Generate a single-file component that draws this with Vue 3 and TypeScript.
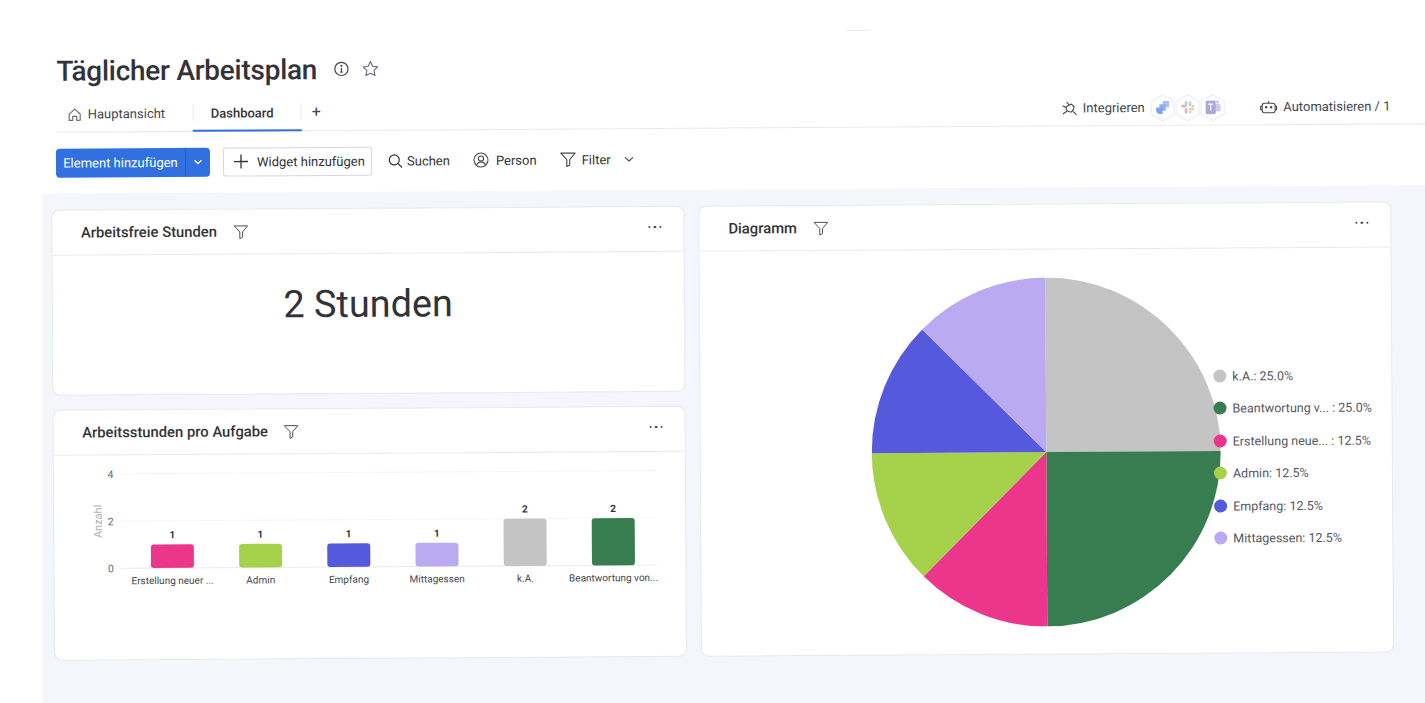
<script setup lang="ts">
// Colours shared by the bar chart and the pie
const pieSlices = [
  { label: "k.A.: 25.0%", value: 25, color: "#c4c4c4" },
  { label: "Beantwortung v... : 25.0%", value: 25, color: "#377d50" },
  { label: "Erstellung neue... : 12.5%", value: 12.5, color: "#ec368b" },
  { label: "Admin: 12.5%", value: 12.5, color: "#a6d14a" },
  { label: "Empfang: 12.5%", value: 12.5, color: "#5559db" },
  { label: "Mittagessen: 12.5%", value: 12.5, color: "#b9aaf2" },
];

const bars = [
  { label: "Erstellung neuer ...", value: 1, color: "#ec368b" },
  { label: "Admin", value: 1, color: "#a6d14a" },
  { label: "Empfang", value: 1, color: "#5559db" },
  { label: "Mittagessen", value: 1, color: "#b9aaf2" },
  { label: "k.A.", value: 2, color: "#c4c4c4" },
  { label: "Beantwortung von...", value: 2, color: "#377d50" },
];

const R = 174.5;
function slicePaths() {
  let start = 0;
  return pieSlices.map((s) => {
    const end = start + (s.value / 100) * Math.PI * 2;
    const x1 = R + R * Math.sin(start);
    const y1 = R - R * Math.cos(start);
    const x2 = R + R * Math.sin(end);
    const y2 = R - R * Math.cos(end);
    start = end;
    return { d: `M${R} ${R}L${x1} ${y1}A${R} ${R} 0 0 1 ${x2} ${y2}Z`, color: s.color };
  });
}
const slices = slicePaths();

const baseY = 112;
const unit = 23.6;
</script>

<template>
  <div class="stage">
    <div class="page">
      <div class="notch"></div>

      <div class="title-row">
        <h1>Täglicher Arbeitsplan</h1>
        <svg class="ico info" width="16" height="16" viewBox="0 0 16 16" fill="none" stroke="#44464f" stroke-width="1.2">
          <circle cx="8" cy="8" r="6.6" />
          <path d="M8 7.2v4M6.8 11.2h2.4" />
          <circle cx="8" cy="4.9" r=".5" fill="#44464f" />
        </svg>
        <svg class="ico star" width="18" height="18" viewBox="0 0 18 18" fill="none" stroke="#676879" stroke-width="1.1" stroke-linejoin="round">
          <path d="M9 1.8l2.2 4.7 5 .7-3.6 3.5.9 5.1L9 13.4l-4.5 2.4.9-5.1L1.800 7.200l5-.7z" />
        </svg>
      </div>

      <div class="tab-row">
        <div class="tab home">
          <svg width="14" height="14" viewBox="0 0 14 14" fill="none" stroke="#676879" stroke-width="1.1" stroke-linejoin="round">
            <path d="M1.500 6.500L7 1.500l5.500 5v6.300H9V8.800H5v4H1.500z" />
          </svg>
          <span>Hauptansicht</span>
        </div>
        <div class="tab active">Dashboard</div>
        <div class="tab-add">+</div>

        <div class="tab-right">
          <svg class="plug" width="16" height="16" viewBox="0 0 16 16" fill="none" stroke="#44464f" stroke-width="1.1" stroke-linejoin="round">
            <path d="M4.500 6.200L9.700 3.600q2.700 2.700 2.700 2.700-.2 3.200-2.700 5.200-2.800.4-5.200-2.500zM5 1.500l2.500 3.200M1 5.200l3.600 2M5.500 10.500l-4.300 3M11.500 11l3.300 3.500" />
          </svg>
          <span class="int-label">Integrieren</span>
          <div class="hexes">
            <svg width="26" height="28" viewBox="0 0 26 28">
              <path d="M13 1l11.500 6.500v13L13 27 1.500 20.500v-13z" fill="#fff" stroke="#e8eaf3" />
              <path d="M13 7h6.500v6.500H17a4 4 0 0 1-4-4z" fill="#a9c5f7" />
              <path d="M9.700 10.300h6.500v6.500h-2.500a4 4 0 0 1-4-4z" fill="#8fb2f2" />
              <path d="M6.400 13.600h6.500v6.500h-2.500a4 4 0 0 1-4-4z" fill="#7ea2ee" />
            </svg>
            <svg width="26" height="28" viewBox="0 0 26 28">
              <path d="M13 1l11.500 6.500v13L13 27 1.500 20.500v-13z" fill="#fff" stroke="#e8eaf3" />
              <rect x="6.500" y="11" width="5.500" height="2.800" rx="1.400" fill="#f0a8cb" />
              <rect x="10" y="7" width="2.800" height="5.500" rx="1.400" fill="#c3ced4" />
              <rect x="14" y="14" width="5.500" height="2.800" rx="1.400" fill="#e7d59a" />
              <rect x="14" y="7.500" width="2.800" height="5.500" rx="1.400" fill="#bcd9c9" />
              <rect x="17" y="11" width="2.800" height="2.800" rx="1.400" fill="#bcd9c9" />
              <rect x="10" y="14.500" width="2.800" height="5.500" rx="1.400" fill="#f0a8cb" />
              <rect x="14" y="17" width="2.800" height="3" rx="1.400" fill="#e7d59a" />
            </svg>
            <svg width="26" height="28" viewBox="0 0 26 28">
              <path d="M13 1l11.500 6.500v13L13 27 1.500 20.500v-13z" fill="#fff" stroke="#e8eaf3" />
              <rect x="14" y="10.500" width="7" height="7.500" rx="1.500" fill="#cdcbec" />
              <circle cx="18" cy="8.500" r="1.700" fill="#cdcbec" />
              <rect x="6" y="7" width="10" height="13.500" rx="1" fill="#aaa7dc" />
              <path d="M8.500 10.500h5M11 10.500v6.500" stroke="#fff" stroke-width="1.200" />
            </svg>
          </div>
          <svg class="robot" width="18" height="14" viewBox="0 0 18 14" fill="none" stroke="#44464f" stroke-width="1.1">
            <rect x="2.500" y="3" width="13" height="9.500" rx="2.500" />
            <path d="M2.500 6H1v3.500h1.500M15.500 6H17v3.500h-1.500M9 3V1" />
            <circle cx="6.500" cy="7" r=".7" fill="#44464f" />
            <circle cx="11.500" cy="7" r=".7" fill="#44464f" />
          </svg>
          <span class="auto-label">Automatisieren / 1</span>
        </div>
      </div>

      <div class="toolbar">
        <div class="add-btn">
          <span class="add-main">Element hinzufügen</span>
          <span class="add-caret">
            <svg width="10" height="10" viewBox="0 0 10 10" fill="none" stroke="#fff" stroke-width="1.400"><path d="M1.500 3.500L5 6.800l3.500-3.300" /></svg>
          </span>
        </div>
        <div class="widget-btn">
          <svg width="16" height="16" viewBox="0 0 16 16" stroke="#323338" stroke-width="1.300"><path d="M8 1v14M1 8h14" /></svg>
          <span>Widget hinzufügen</span>
        </div>
        <div class="tool search">
          <svg width="15" height="15" viewBox="0 0 15 15" fill="none" stroke="#323338" stroke-width="1.200"><circle cx="6.300" cy="6.300" r="5" /><path d="M10 10l4 4" /></svg>
          <span>Suchen</span>
        </div>
        <div class="tool person">
          <svg width="16" height="16" viewBox="0 0 16 16" fill="none" stroke="#44464f" stroke-width="1.100">
            <circle cx="8" cy="8" r="7" />
            <circle cx="8" cy="6.500" r="2.600" />
            <path d="M3.500 13c1-2.300 2.500-3 4.500-3s3.500.7 4.500 3" />
          </svg>
          <span>Person</span>
        </div>
        <div class="tool filter">
          <svg width="16" height="16" viewBox="0 0 16 16" fill="none" stroke="#44464f" stroke-width="1.100" stroke-linejoin="round"><path d="M.800 1.500h14.400L9.700 8v5.500L6.800 15V8z" /></svg>
          <span>Filter</span>
          <svg class="filter-caret" width="10" height="10" viewBox="0 0 10 10" fill="none" stroke="#44464f" stroke-width="1.100"><path d="M1 3.200l4 3.600 4-3.600" /></svg>
        </div>
      </div>

      <div class="panel">
        <div class="col-left">
          <section class="card hours">
            <header class="card-head">
              <h2>Arbeitsfreie Stunden</h2>
              <svg class="funnel" width="15" height="15" viewBox="0 0 16 16" fill="none" stroke="#44464f" stroke-width="1" stroke-linejoin="round"><path d="M.800 1.500h14.400L9.700 8v5.500L6.800 15V8z" /></svg>
              <span class="dots"><i></i><i></i><i></i></span>
            </header>
            <div class="big-number">2 Stunden</div>
          </section>

          <section class="card tasks">
            <header class="card-head">
              <h2>Arbeitsstunden pro Aufgabe</h2>
              <svg class="funnel" width="15" height="15" viewBox="0 0 16 16" fill="none" stroke="#44464f" stroke-width="1" stroke-linejoin="round"><path d="M.800 1.500h14.400L9.700 8v5.500L6.800 15V8z" /></svg>
              <span class="dots"><i></i><i></i><i></i></span>
            </header>
            <svg class="bar-chart" width="630" height="150" viewBox="0 0 630 150">
              <g v-for="n in [0, 2, 4]" :key="n">
                <line x1="66.500" x2="602.500" :y1="baseY - n * unit" :y2="baseY - n * unit" :stroke="n === 0 ? '#e6e9ef' : '#f3f4f8'" />
                <text x="59.500" :y="baseY - n * unit + 4" text-anchor="end" class="axis">{{ n }}</text>
              </g>
              <text class="axis-title" transform="translate(47.500 65) rotate(-90)" text-anchor="middle">Anzahl</text>
              <g v-for="(b, i) in bars" :key="b.label">
                <rect :x="96.500 + i * 88.2" :y="baseY - b.value * unit" width="43" :height="b.value * unit" rx="3" :fill="b.color" />
                <text :x="118 + i * 88.2" :y="baseY - b.value * unit - 6" text-anchor="middle" class="bar-value">{{ b.value }}</text>
                <text :x="118 + i * 88.2" :y="baseY + 16" text-anchor="middle" class="bar-label">{{ b.label }}</text>
              </g>
            </svg>
          </section>
        </div>

        <section class="card pie-card">
          <header class="card-head">
            <h2>Diagramm</h2>
            <svg class="funnel" width="15" height="15" viewBox="0 0 16 16" fill="none" stroke="#44464f" stroke-width="1" stroke-linejoin="round"><path d="M.800 1.500h14.400L9.700 8v5.500L6.800 15V8z" /></svg>
            <span class="dots"><i></i><i></i><i></i></span>
          </header>
          <div class="pie-body">
            <svg class="pie" width="349" height="349" viewBox="0 0 349 349">
              <path v-for="s in slices" :key="s.color" :d="s.d" :fill="s.color" />
            </svg>
            <ul class="legend">
              <li v-for="s in pieSlices" :key="s.label">
                <span class="dot" :style="{ background: s.color }"></span>
                <span>{{ s.label }}</span>
              </li>
            </ul>
          </div>
        </section>
      </div>
    </div>
    <!-- the screenshot is cropped straight on the left, over the tilted page -->
    <div class="left-mask"></div>
  </div>
</template>

<style>
html, body {
  margin: 0;
  overflow: hidden;
  background: #fff;
}
</style>

<style scoped>
.stage {
  position: relative;
  width: 1425px;
  height: 703px;
  overflow: hidden;
  background: #fff;
  font-family: Roboto, "Liberation Sans", sans-serif;
  color: #323338;
}

.page {
  width: 1450px;
  transform: rotate(-0.35deg);
  transform-origin: 0 0;
}

.notch {
  width: 25px;
  height: 1px;
  margin-left: 845px;
  padding-top: 35px;
  background: linear-gradient(#fff 35px, #e4e4e4 35px);
}

.left-mask {
  position: absolute;
  left: 0;
  top: 180px;
  width: 42px;
  height: 523px;
  background: #fff;
}

/* Title */
.title-row {
  display: flex;
  align-items: center;
  height: 36px;
  margin-top: 17px;
  padding-left: 56px;
}
h1 {
  margin: 0;
  font-size: 28px;
  font-weight: 500;
  letter-spacing: -0.26px;
  color: #323338;
}
.info { margin-left: 16px; }
.star { margin-left: 12px; }

/* Tabs */
.tab-row {
  display: flex;
  align-items: center;
  height: 35px;
  margin-top: 8px;
  margin-left: 56px;
  border-bottom: 1px solid #e6e9ef;
  font-size: 13px;
}
.tab {
  display: flex;
  align-items: center;
  height: 100%;
  box-sizing: border-box;
}
.tab.home {
  width: 136px;
  padding-left: 11px;
  gap: 6px;
  color: #44464f;
}
.tab.active {
  width: 109px;
  padding-left: 18px;
  font-weight: 500;
  border-bottom: 2px solid #3070e0;
  margin-bottom: -1px;
  position: relative;
}
.tab.active::before,
.tab.active::after {
  content: "";
  position: absolute;
  top: 7px;
  height: 17px;
  width: 1px;
  background: #e6e9ef;
}
.tab.active::before { left: 0; }
.tab.active::after { right: 0; }
.tab-add {
  margin-left: 10px;
  margin-bottom: 2px;
  font-size: 16px;
  color: #44464f;
}
.tab-right {
  display: flex;
  align-items: center;
  margin-left: 741px;
  color: #44464f;
}
.int-label { margin-left: 5px; }
.hexes {
  display: flex;
  margin-left: 5px;
}
.hexes svg { margin-right: -1px; }
.robot { margin-left: 35px; }
.auto-label { margin-left: 5.500px; }

/* Toolbar */
.toolbar {
  display: flex;
  align-items: center;
  height: 30px;
  margin-top: 15px;
  margin-left: 55px;
  font-size: 13px;
}
.add-btn {
  display: flex;
  width: 154px;
  height: 29px;
  background: #3070e0;
  border-radius: 4px;
  color: #fff;
  line-height: 29px;
}
.add-main {
  width: 129px;
  text-align: center;
  border-right: 1px solid #2560c8;
}
.add-caret {
  flex: 1;
  display: flex;
  align-items: center;
  justify-content: center;
}
.widget-btn {
  display: flex;
  align-items: center;
  box-sizing: border-box;
  width: 149px;
  height: 29px;
  margin-left: 13px;
  padding-left: 9px;
  gap: 8px;
  border: 1px solid #d5d8df;
  border-radius: 3px;
}
.tool {
  display: flex;
  align-items: center;
  gap: 4px;
}
.search { margin-left: 16px; }
.person { margin-left: 23px; gap: 7px; }
.filter { margin-left: 23px; gap: 6px; }
.filter-caret { margin-left: 7px; }

/* Panel */
.panel {
  display: flex;
  gap: 14px;
  height: 540px;
  margin-top: 16px;
  margin-left: 30px;
  padding: 16px 0 0 19.500px;
  background: #f5f6fb;
  align-items: flex-start;
}
.col-left {
  display: flex;
  flex-direction: column;
  gap: 14px;
  width: 633.500px;
}
.card {
  box-sizing: border-box;
  background: #fff;
  border: 1px solid #e6e9ef;
  border-radius: 8px;
  overflow: hidden;
}
.hours { height: 186px; }
.tasks { height: 251px; }
.pie-card {
  width: 693px;
  height: 451px;
}
.card-head {
  display: flex;
  align-items: center;
  height: 44px;
  padding: 0 22px 0 29px;
  border-bottom: 1px solid #e6e9ef;
}
h2 {
  margin: 0;
  font-size: 14.800px;
  font-weight: 500;
  color: #323338;
}
.funnel { margin-left: 16px; }
.dots {
  display: flex;
  gap: 3px;
  margin-left: auto;
  margin-bottom: 4px;
}
.dots i {
  width: 2.500px;
  height: 2.500px;
  border-radius: 50%;
  background: #44464f;
}
.big-number {
  margin-top: 27px;
  text-align: center;
  font-size: 37.800px;
  line-height: 46px;
  color: #323338;
}

/* Bar chart */
.bar-chart {
  display: block;
  margin-top: 1px;
}
.axis {
  font-size: 10.500px;
  fill: #676879;
}
.axis-title {
  font-size: 11px;
  fill: #b0b2b8;
}
.bar-value {
  font-size: 10px;
  font-weight: 700;
  fill: #323338;
}
.bar-label {
  font-size: 10px;
  fill: #44464f;
}

/* Pie */
.pie-body {
  display: flex;
  align-items: center;
  height: 405px;
  padding-left: 171px;
}
.pie {
  flex: none;
  margin-bottom: 1px;
}
.legend {
  list-style: none;
  margin: 12px 0 0 -7px;
  padding: 0;
  display: flex;
  flex-direction: column;
  gap: 14.400px;
  font-size: 12.500px;
  color: #555761;
}
.legend li {
  display: flex;
  align-items: center;
  gap: 6px;
  height: 18px;
  white-space: nowrap;
}
.dot {
  width: 13px;
  height: 13px;
  border-radius: 50%;
}
</style>
